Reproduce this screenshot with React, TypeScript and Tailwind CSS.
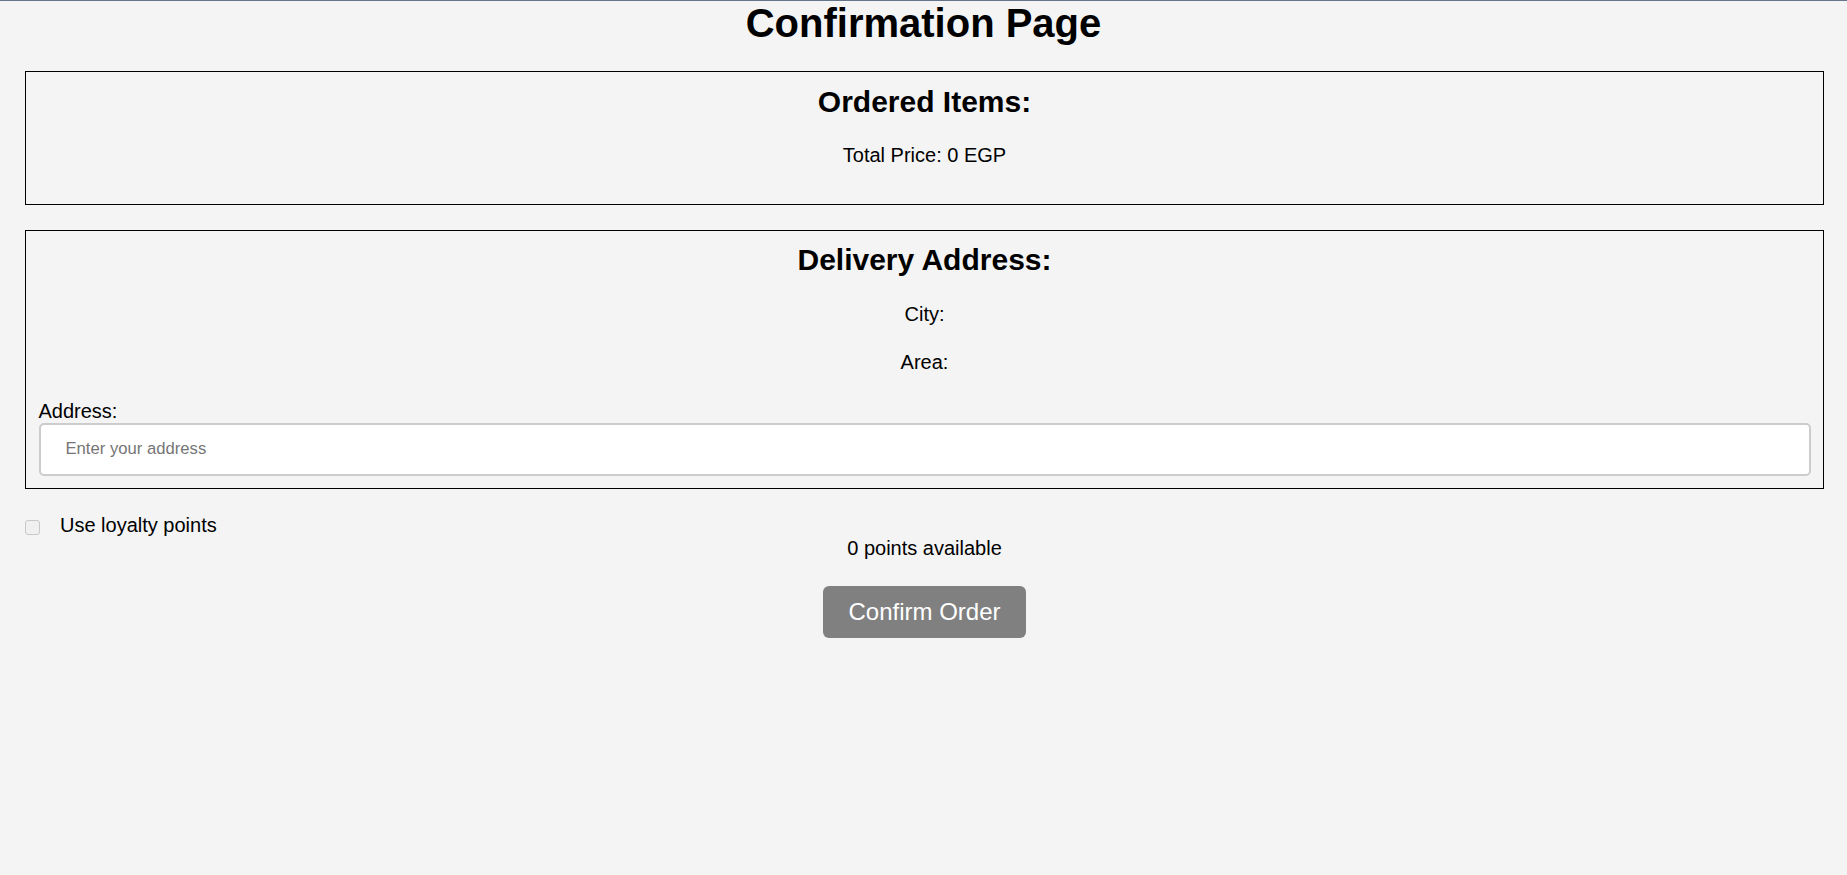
export default function App() {
  return (
    <div className="min-h-screen bg-[#f4f4f4] border-t border-[#66758c] text-black font-['Liberation_Sans',Arial,sans-serif]">
      <h1 className="text-center text-[40px] font-bold leading-[45px]">Confirmation Page</h1>
      <div className="ml-[25px] mr-[23px]">
        <section className="mt-[25px] border border-black p-[12.5px]">
          <h2 className="text-center text-[30px] font-bold leading-[34.5px]">Ordered Items:</h2>
          <p className="mt-[25px] mb-[24px] text-center text-[20px] leading-[23px]">Total Price: 0 EGP</p>
        </section>
        <section className="mt-[25px] border border-black p-[12.5px]">
          <h2 className="text-center text-[30px] font-bold leading-[34.5px]">Delivery Address:</h2>
          <p className="mt-[25px] text-center text-[20px] leading-[23px]">City: </p>
          <p className="mt-[25px] text-center text-[20px] leading-[23px]">Area: </p>
          <label className="mt-[26px] block text-[20px] leading-[23px]" htmlFor="address">Address:</label>
          <input
            id="address"
            type="text"
            placeholder="Enter your address"
            className="block w-full h-[53px] rounded-[5px] border-2 border-[#cccccc] bg-white px-[25px] text-[16.67px] leading-[19px] outline-none placeholder:text-[#757575] font-['Liberation_Sans',Arial,sans-serif]"
          />
        </section>
        <div className="mt-[25px] flex items-start text-[20px] leading-[23px]">
          <span className="mt-[6px] block w-[15px] h-[15px] rounded-[3px] border border-[#c8c8c8] bg-[#f0f0f0]"></span>
          <span className="ml-[20px]">Use loyalty points</span>
        </div>
        <p className="text-center text-[20px] leading-[23px]">0 points available</p>
        <div className="mt-[26px] flex justify-center">
          <button className="rounded-[6px] bg-[#808080] px-[25px] py-[12px] text-[24px] leading-[28px] text-white font-['Liberation_Sans',Arial,sans-serif]">
            Confirm Order
          </button>
        </div>
      </div>
    </div>
  );
}
